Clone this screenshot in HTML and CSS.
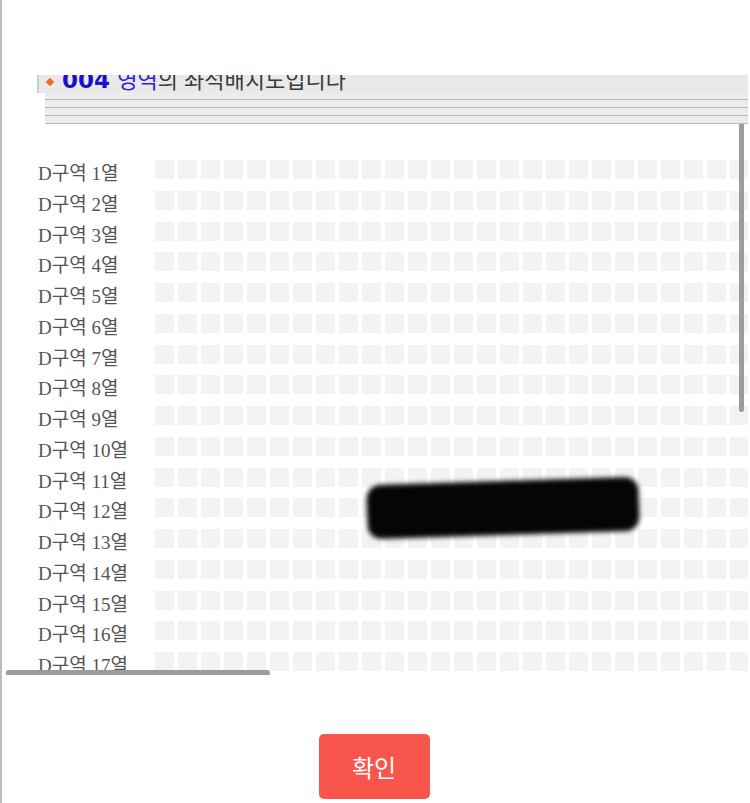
FILE: index.html
```html
<!DOCTYPE html>
<html lang="ko">
<head>
<meta charset="utf-8">
<title>좌석배치도</title>
<link rel="stylesheet" href="styles.css">
</head>
<body>
<div class="page">
  <div class="header">
    <div class="title-bar">
      <p class="title"><span class="diamond"></span><b class="num">004</b> <span class="area">영역</span>의 좌석배치도입니다</p>
    </div>
    <div class="lines">
      <div class="line"></div><div class="line"></div><div class="line"></div><div class="line"></div>
    </div>
  </div>

  <div class="seat-map">
    <div class="row"><span class="label">D구역 1열</span><div class="seats"><i></i><i></i><i></i><i></i><i></i><i></i><i></i><i></i><i></i><i></i><i></i><i></i><i></i><i></i><i></i><i></i><i></i><i></i><i></i><i></i><i></i><i></i><i></i><i></i><i></i><i></i><i></i></div></div>
    <div class="row"><span class="label">D구역 2열</span><div class="seats"><i></i><i></i><i></i><i></i><i></i><i></i><i></i><i></i><i></i><i></i><i></i><i></i><i></i><i></i><i></i><i></i><i></i><i></i><i></i><i></i><i></i><i></i><i></i><i></i><i></i><i></i><i></i></div></div>
    <div class="row"><span class="label">D구역 3열</span><div class="seats"><i></i><i></i><i></i><i></i><i></i><i></i><i></i><i></i><i></i><i></i><i></i><i></i><i></i><i></i><i></i><i></i><i></i><i></i><i></i><i></i><i></i><i></i><i></i><i></i><i></i><i></i><i></i></div></div>
    <div class="row"><span class="label">D구역 4열</span><div class="seats"><i></i><i></i><i></i><i></i><i></i><i></i><i></i><i></i><i></i><i></i><i></i><i></i><i></i><i></i><i></i><i></i><i></i><i></i><i></i><i></i><i></i><i></i><i></i><i></i><i></i><i></i><i></i></div></div>
    <div class="row"><span class="label">D구역 5열</span><div class="seats"><i></i><i></i><i></i><i></i><i></i><i></i><i></i><i></i><i></i><i></i><i></i><i></i><i></i><i></i><i></i><i></i><i></i><i></i><i></i><i></i><i></i><i></i><i></i><i></i><i></i><i></i><i></i></div></div>
    <div class="row"><span class="label">D구역 6열</span><div class="seats"><i></i><i></i><i></i><i></i><i></i><i></i><i></i><i></i><i></i><i></i><i></i><i></i><i></i><i></i><i></i><i></i><i></i><i></i><i></i><i></i><i></i><i></i><i></i><i></i><i></i><i></i><i></i></div></div>
    <div class="row"><span class="label">D구역 7열</span><div class="seats"><i></i><i></i><i></i><i></i><i></i><i></i><i></i><i></i><i></i><i></i><i></i><i></i><i></i><i></i><i></i><i></i><i></i><i></i><i></i><i></i><i></i><i></i><i></i><i></i><i></i><i></i><i></i></div></div>
    <div class="row"><span class="label">D구역 8열</span><div class="seats"><i></i><i></i><i></i><i></i><i></i><i></i><i></i><i></i><i></i><i></i><i></i><i></i><i></i><i></i><i></i><i></i><i></i><i></i><i></i><i></i><i></i><i></i><i></i><i></i><i></i><i></i><i></i></div></div>
    <div class="row"><span class="label">D구역 9열</span><div class="seats"><i></i><i></i><i></i><i></i><i></i><i></i><i></i><i></i><i></i><i></i><i></i><i></i><i></i><i></i><i></i><i></i><i></i><i></i><i></i><i></i><i></i><i></i><i></i><i></i><i></i><i></i><i></i></div></div>
    <div class="row"><span class="label">D구역 10열</span><div class="seats"><i></i><i></i><i></i><i></i><i></i><i></i><i></i><i></i><i></i><i></i><i></i><i></i><i></i><i></i><i></i><i></i><i></i><i></i><i></i><i></i><i></i><i></i><i></i><i></i><i></i><i></i><i></i></div></div>
    <div class="row"><span class="label">D구역 11열</span><div class="seats"><i></i><i></i><i></i><i></i><i></i><i></i><i></i><i></i><i></i><i></i><i></i><i></i><i></i><i></i><i></i><i></i><i></i><i></i><i></i><i></i><i></i><i></i><i></i><i></i><i></i><i></i><i></i></div></div>
    <div class="row"><span class="label">D구역 12열</span><div class="seats"><i></i><i></i><i></i><i></i><i></i><i></i><i></i><i></i><i></i><i></i><i></i><i></i><i></i><i></i><i></i><i></i><i></i><i></i><i></i><i></i><i></i><i></i><i></i><i></i><i></i><i></i><i></i></div></div>
    <div class="row"><span class="label">D구역 13열</span><div class="seats"><i></i><i></i><i></i><i></i><i></i><i></i><i></i><i></i><i></i><i></i><i></i><i></i><i></i><i></i><i></i><i></i><i></i><i></i><i></i><i></i><i></i><i></i><i></i><i></i><i></i><i></i><i></i></div></div>
    <div class="row"><span class="label">D구역 14열</span><div class="seats"><i></i><i></i><i></i><i></i><i></i><i></i><i></i><i></i><i></i><i></i><i></i><i></i><i></i><i></i><i></i><i></i><i></i><i></i><i></i><i></i><i></i><i></i><i></i><i></i><i></i><i></i><i></i></div></div>
    <div class="row"><span class="label">D구역 15열</span><div class="seats"><i></i><i></i><i></i><i></i><i></i><i></i><i></i><i></i><i></i><i></i><i></i><i></i><i></i><i></i><i></i><i></i><i></i><i></i><i></i><i></i><i></i><i></i><i></i><i></i><i></i><i></i><i></i></div></div>
    <div class="row"><span class="label">D구역 16열</span><div class="seats"><i></i><i></i><i></i><i></i><i></i><i></i><i></i><i></i><i></i><i></i><i></i><i></i><i></i><i></i><i></i><i></i><i></i><i></i><i></i><i></i><i></i><i></i><i></i><i></i><i></i><i></i><i></i></div></div>
    <div class="row"><span class="label">D구역 17열</span><div class="seats"><i></i><i></i><i></i><i></i><i></i><i></i><i></i><i></i><i></i><i></i><i></i><i></i><i></i><i></i><i></i><i></i><i></i><i></i><i></i><i></i><i></i><i></i><i></i><i></i><i></i><i></i><i></i></div></div>

    <div class="redaction"></div>
    <div class="scrollbar-v"></div>
    <div class="scrollbar-h"></div>
  </div>

  <div class="footer">
    <button class="confirm" type="button">확인</button>
  </div>
</div>
</body>
</html>
```

FILE: styles.css
```css
html, body {
  margin: 0;
  padding: 0;
  background: #ffffff;
}

.page {
  width: 748px;
  height: 803px;
  border-left: 2px solid #bdbdbd;
  padding-top: 75px;
  box-sizing: border-box;
  overflow: hidden;
}

/* ---------- header ---------- */
.header {
  margin-left: 35px;
}

.title-bar {
  height: 18px;
  background: #e9e9e9;
  border-left: 2px solid #cfcfcf;
  overflow: hidden;
}

.title {
  margin: -4px 0 0 0;
  padding-left: 6px;
  line-height: 18px;
  font-family: "Liberation Sans", "Noto Sans CJK KR", sans-serif;
  font-size: 22px;
  color: #3c3c3c;
  white-space: nowrap;
}

.diamond {
  display: inline-block;
  width: 6px;
  height: 6px;
  background: #f26b1d;
  transform: rotate(45deg);
  margin: 0 9px 0 2px;
  vertical-align: 3px;
}

.num {
  font-family: "DejaVu Sans", sans-serif;
  font-weight: bold;
  font-size: 23px;
  color: #1c10d0;
  margin-right: 1px;
}

.area {
  color: #2b22e0;
}

.lines {
  margin-left: 8px;
  background: #ececec;
}

.line {
  height: 7px;
  border-bottom: 1px solid #b9b9b9;
}

.line:first-child {
  height: 6px;
}

/* ---------- seat map ---------- */
.seat-map {
  position: relative;
  height: 551px;
  overflow: hidden;
  padding: 36px 0 0 36px;
  box-sizing: border-box;
}

.row {
  display: flex;
  align-items: flex-start;
  height: 30.75px;
}

.label {
  flex: 0 0 117px;
  padding-top: 4px;
  line-height: 19px;
  font-family: "Liberation Serif", "Noto Sans CJK KR", serif;
  font-size: 19px;
  color: #555555;
  white-space: nowrap;
}

.seats {
  display: flex;
  gap: 4px;
}

.seats i {
  flex: 0 0 19px;
  height: 19px;
  background: #f3f3f3;
}

.redaction {
  position: absolute;
  left: 365px;
  top: 357px;
  width: 272px;
  height: 54px;
  background: #050505;
  border-radius: 14px;
  transform: rotate(-1.8deg);
  filter: blur(2.5px);
}

.scrollbar-v {
  position: absolute;
  left: 737px;
  top: -1px;
  width: 5px;
  height: 289px;
  border-radius: 3px;
  background: #9c9c9c;
}

.scrollbar-h {
  position: absolute;
  left: 4px;
  top: 546px;
  width: 264px;
  height: 6px;
  border-radius: 3px;
  background: #9c9c9c;
}

/* ---------- footer ---------- */
.footer {
  display: flex;
  justify-content: center;
  padding-top: 59px;
}

.confirm {
  width: 111px;
  height: 65px;
  border: none;
  border-radius: 5px;
  background: #f8564c;
  color: #ffffff;
  font-family: "Noto Sans CJK KR", sans-serif;
  font-size: 24px;
  padding: 0;
  margin-left: -2px;
}
```
